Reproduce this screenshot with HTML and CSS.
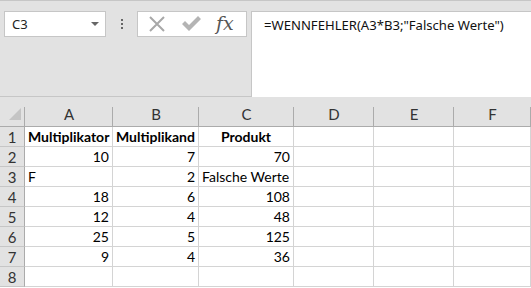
FILE: index.html
```html
<!DOCTYPE html>
<html lang="de">
<head>
    <meta charset="UTF-8">
    <meta name="viewport" content="width=device-width, initial-scale=1.0">
    <title>WENNFEHLER</title>
    <link rel="stylesheet" href="styles.css">
</head>
<body>
    <div class="toolbar">
        <div class="name-box">
            <span class="name-text">C3</span>
            <span class="drop"></span>
        </div>
        <div class="dots"><span></span><span></span><span></span></div>
        <div class="fn-box">
            <svg class="ico" width="18" height="18" viewBox="0 0 18 18">
                <path d="M2 2 L16 16 M16 2 L2 16" stroke="#a8a8a8" stroke-width="2" fill="none"/>
            </svg>
            <svg class="ico" width="20" height="16" viewBox="0 0 20 16">
                <path d="M1 8 L4 5 L8 9 L17 0 L20 3 L8 15 Z" fill="#b4b4b4"/>
            </svg>
            <span class="fx">fx</span>
        </div>
        <div class="formula">=WENNFEHLER(A3*B3;"Falsche Werte")</div>
    </div>

    <div class="sheet">
        <div class="hd corner"><span class="tri"></span></div>
        <div class="hd col">A</div>
        <div class="hd col">B</div>
        <div class="hd col">C</div>
        <div class="hd col">D</div>
        <div class="hd col">E</div>
        <div class="hd col">F</div>

        <div class="rh">1</div>
        <div class="c b">Multiplikator</div>
        <div class="c b">Multiplikand</div>
        <div class="c b mid">Produkt</div>
        <div class="c"></div><div class="c"></div><div class="c"></div>

        <div class="rh">2</div>
        <div class="c num">10</div>
        <div class="c num">7</div>
        <div class="c num">70</div>
        <div class="c"></div><div class="c"></div><div class="c"></div>

        <div class="rh">3</div>
        <div class="c">F</div>
        <div class="c num">2</div>
        <div class="c">Falsche Werte</div>
        <div class="c"></div><div class="c"></div><div class="c"></div>

        <div class="rh">4</div>
        <div class="c num">18</div>
        <div class="c num">6</div>
        <div class="c num">108</div>
        <div class="c"></div><div class="c"></div><div class="c"></div>

        <div class="rh">5</div>
        <div class="c num">12</div>
        <div class="c num">4</div>
        <div class="c num">48</div>
        <div class="c"></div><div class="c"></div><div class="c"></div>

        <div class="rh">6</div>
        <div class="c num">25</div>
        <div class="c num">5</div>
        <div class="c num">125</div>
        <div class="c"></div><div class="c"></div><div class="c"></div>

        <div class="rh">7</div>
        <div class="c num">9</div>
        <div class="c num">4</div>
        <div class="c num">36</div>
        <div class="c"></div><div class="c"></div><div class="c"></div>

        <div class="rh">8</div>
        <div class="c"></div><div class="c"></div><div class="c"></div>
        <div class="c"></div><div class="c"></div><div class="c"></div>
    </div>
</body>
</html>
```

FILE: styles.css
```css
* {
    margin: 0;
    padding: 0;
    box-sizing: border-box;
}

body {
    background-color: #fff;
    font-family: "Lato", "Liberation Sans", sans-serif;
    overflow: hidden;
}

/* obere Leiste */
.toolbar {
    display: flex;
    align-items: flex-start;
    height: 96px;
    padding: 10px 0 0 4px;
    border-top: 1px solid #c6c6c6;
    background-color: #e2e2e2;
}

.toolbar .name-box {
    display: flex;
    align-items: center;
    justify-content: space-between;
    width: 102px;
    height: 26px;
    padding: 0 6px 0 7px;
    border: 1px solid #c6c6c6;
    background-color: #fff;
    font-family: "Noto Sans", sans-serif;
    font-size: 13px;
    color: #222;
}

.toolbar .name-box .drop {
    width: 0;
    height: 0;
    border-left: 4px solid transparent;
    border-right: 4px solid transparent;
    border-top: 4px solid #666;
}

.toolbar .dots {
    display: flex;
    flex-direction: column;
    gap: 2px;
    width: 31px;
    padding: 8px 0 0 15px;
}

.toolbar .dots span {
    width: 2px;
    height: 2px;
    background-color: #666;
}

.toolbar .fn-box {
    display: flex;
    align-items: center;
    width: 110px;
    height: 26px;
    padding: 0 0 0 10px;
    gap: 15px;
    border: 1px solid #c6c6c6;
    background-color: #fff;
}

.toolbar .fn-box .fx {
    font-family: "DejaVu Serif", "Liberation Serif", serif;
    font-style: italic;
    font-size: 19px;
    color: #555;
    margin-top: -2px;
}

.toolbar .formula {
    flex: 1;
    height: 86px;
    margin-left: 4px;
    padding: 4px 0 0 12px;
    border: 1px solid #c6c6c6;
    border-right: none;
    border-bottom: none;
    background-color: #fff;
    font-family: "Noto Sans", sans-serif;
    font-size: 13.1px;
    color: #111;
}

/* Tabelle */
.sheet {
    display: grid;
    grid-template-columns: 25px 88px 86px 95px 80px 80px 1fr;
    grid-auto-rows: 20px;
    grid-template-rows: 30px;
    border-top: 1px solid #c6c6c6;
    font-size: 15px;
}

.sheet .hd {
    background: linear-gradient(#ababab, #ababab) right bottom / 1px 19px no-repeat, #e2e2e2;
    border-bottom: 1px solid #ababab;
    color: #333;
    text-align: center;
    line-height: 30px;
    padding-top: 2px;
}

.sheet .corner {
    padding: 11px 0 0 9px;
}

.sheet .corner .tri {
    display: block;
    width: 0;
    height: 0;
    border-left: 12px solid transparent;
    border-bottom: 12px solid #c4c4c4;
}

.sheet .rh {
    background-color: #e2e2e2;
    border-right: 1px solid #ababab;
    border-bottom: 1px solid #c6c6c6;
    color: #333;
    text-align: center;
    line-height: 20px;
}

.sheet .c {
    border-right: 1px solid #d4d4d4;
    border-bottom: 1px solid #d4d4d4;
    padding: 0 3px;
    font-size: 14px;
    line-height: 20px;
    white-space: nowrap;
    color: #000;
}

.sheet .b {
    font-weight: bold;
}

.sheet .mid {
    text-align: center;
}

.sheet .num {
    text-align: right;
}
```
